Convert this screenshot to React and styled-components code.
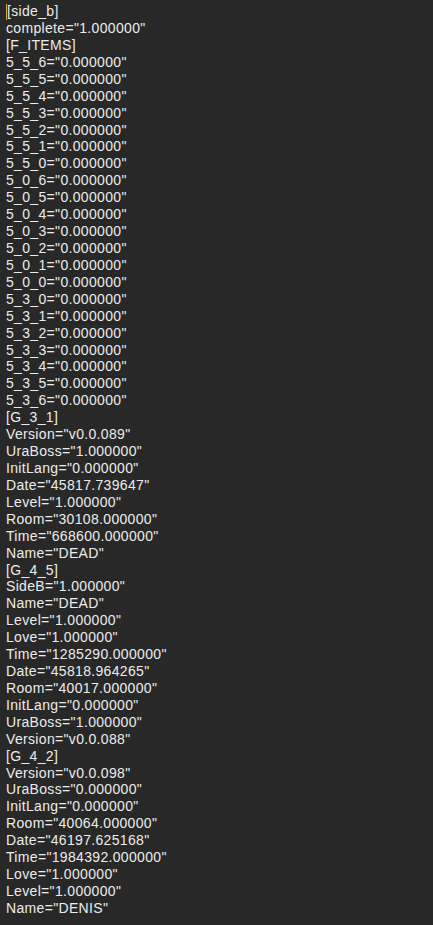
import React from "react";
import styled, { createGlobalStyle } from "styled-components";

const lines = [
  "[side_b]",
  'complete="1.000000"',
  "[F_ITEMS]",
  '5_5_6="0.000000"',
  '5_5_5="0.000000"',
  '5_5_4="0.000000"',
  '5_5_3="0.000000"',
  '5_5_2="0.000000"',
  '5_5_1="0.000000"',
  '5_5_0="0.000000"',
  '5_0_6="0.000000"',
  '5_0_5="0.000000"',
  '5_0_4="0.000000"',
  '5_0_3="0.000000"',
  '5_0_2="0.000000"',
  '5_0_1="0.000000"',
  '5_0_0="0.000000"',
  '5_3_0="0.000000"',
  '5_3_1="0.000000"',
  '5_3_2="0.000000"',
  '5_3_3="0.000000"',
  '5_3_4="0.000000"',
  '5_3_5="0.000000"',
  '5_3_6="0.000000"',
  "[G_3_1]",
  'Version="v0.0.089"',
  'UraBoss="1.000000"',
  'InitLang="0.000000"',
  'Date="45817.739647"',
  'Level="1.000000"',
  'Room="30108.000000"',
  'Time="668600.000000"',
  'Name="DEAD"',
  "[G_4_5]",
  'SideB="1.000000"',
  'Name="DEAD"',
  'Level="1.000000"',
  'Love="1.000000"',
  'Time="1285290.000000"',
  'Date="45818.964265"',
  'Room="40017.000000"',
  'InitLang="0.000000"',
  'UraBoss="1.000000"',
  'Version="v0.0.088"',
  "[G_4_2]",
  'Version="v0.0.098"',
  'UraBoss="0.000000"',
  'InitLang="0.000000"',
  'Room="40064.000000"',
  'Date="46197.625168"',
  'Time="1984392.000000"',
  'Love="1.000000"',
  'Level="1.000000"',
  'Name="DENIS"',
];

const GlobalStyle = createGlobalStyle`
  html, body {
    margin: 0;
    background: #282828;
  }
`;

const Editor = styled.div`
  min-height: 925px;
  box-sizing: border-box;
  padding: 3px 0 0 6px;
  background: #282828;
  font-family: "Liberation Sans", Arial, sans-serif;
  font-size: 14px;
  line-height: 16.92px;
  letter-spacing: 0.33px;
  color: #ececec;
`;

const Line = styled.div`
  white-space: pre;
`;

const Caret = styled.span`
  display: inline-block;
  width: 1px;
  height: 16px;
  margin-top: 1px;
  vertical-align: top;
  background: #d9a441;
`;

export default function App() {
  return (
    <>
      <GlobalStyle />
      <Editor>
        {lines.map((text, i) => (
          <Line key={i}>
            {i === 0 && <Caret />}
            {text}
          </Line>
        ))}
      </Editor>
    </>
  );
}
